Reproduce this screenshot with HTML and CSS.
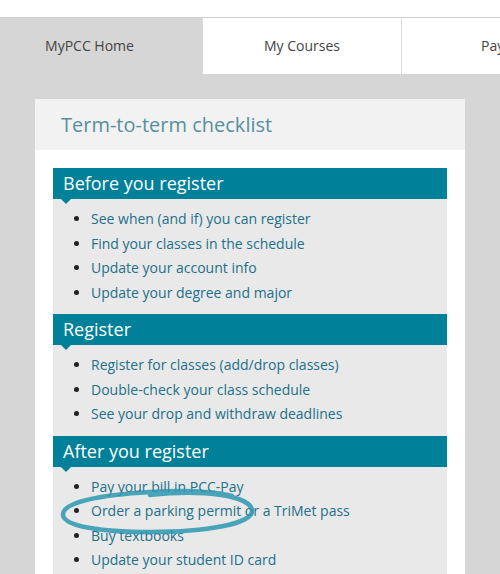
FILE: index.html
```html
<!DOCTYPE html>
<html>
    <head>
        <link rel="stylesheet" href="styles.css">
    </head>
    <body>
        <div class="topbar"></div>
        <div class="tabs">
            <div class="tab active">MyPCC Home</div>
            <div class="tab">My Courses</div>
            <div class="tab last">Pay</div>
        </div>

        <div class="card">
            <div class="card-head">Term-to-term checklist</div>
            <div class="card-body">
                <div class="section">
                    <h2>Before you register</h2>
                    <ul>
                        <li><a href="#">See when (and if) you can register</a></li>
                        <li><a href="#">Find your classes in the schedule</a></li>
                        <li><a href="#">Update your account info</a></li>
                        <li><a href="#">Update your degree and major</a></li>
                    </ul>
                </div>
                <div class="section">
                    <h2>Register</h2>
                    <ul>
                        <li><a href="#">Register for classes (add/drop classes)</a></li>
                        <li><a href="#">Double-check your class schedule</a></li>
                        <li><a href="#">See your drop and withdraw deadlines</a></li>
                    </ul>
                </div>
                <div class="section">
                    <h2>After you register</h2>
                    <ul>
                        <li><a href="#">Pay your bill in PCC-Pay</a></li>
                        <li><a href="#">Order a parking permit or a TriMet pass</a></li>
                        <li><a href="#">Buy textbooks</a></li>
                        <li><a href="#">Update your student ID card</a></li>
                    </ul>
                </div>
            </div>
        </div>

        <!-- hand drawn circle around the parking permit link -->
        <svg class="scribble" width="500" height="574" viewBox="0 0 500 574">
            <path d="M150 495 C205 489 250 496 252 510 C254 524 205 532 150 532 C100 532 62 526 63 514 C64 502 100 495 150 492 C185 490 212 491 232 496"
                  fill="none" stroke="#2d97b0" stroke-opacity="0.85" stroke-width="4.5" stroke-linecap="round"/>
        </svg>
    </body>
</html>
```

FILE: styles.css
```css
body{
    margin:0;
    background-color:#d6d6d6;
    font-family:"Open Sans", "DejaVu Sans", sans-serif;
    position:relative;
    overflow:hidden;
    height:574px;
}

.topbar{
    height:17px;
    background-color:#fff;
    border-bottom:1px solid #d0d0d0;
}

.tabs{
    display:flex;
    height:56px;
    white-space:nowrap;
}
.tab{
    flex:0 0 198px;
    display:flex;
    align-items:center;
    justify-content:center;
    background-color:#fff;
    border-left:1px solid #dcdcdc;
    color:#444;
    font-size:14px;
    padding-bottom:2px;
}
.tab.active{
    flex-basis:179px;
    padding-right:23px;
    background-color:transparent;
    border-left:none;
}
.tab.last{
    flex:1;
    justify-content:flex-start;
    padding-left:79px;
}

.card{
    margin:25px 0 0 35px;
    width:430px;
    background-color:#fff;
}
.card-head{
    height:51px;
    line-height:52px;
    padding-left:26px;
    background-color:#f2f2f2;
    color:#5690a1;
    font-size:20px;
}
.card-body{
    padding:18px 18px 0;
}

.section h2{
    position:relative;
    margin:0;
    height:31px;
    line-height:31px;
    padding-left:10px;
    background-color:#008199;
    color:#fff;
    font-size:18px;
    font-weight:normal;
}
.section h2::after{
    content:"";
    position:absolute;
    left:8px;
    top:31px;
    border-left:5px solid transparent;
    border-right:5px solid transparent;
    border-top:5px solid #008199;
}
.section ul{
    margin:0;
    padding:8px 0 9px 38px;
    background-color:#e9e9e9;
}
.section li{
    line-height:24.5px;
    font-size:14px;
    color:#222;
}
a{
    text-decoration:none;
    color:#22708a;
}

.scribble{
    position:absolute;
    left:0;
    top:0;
    pointer-events:none;
}
```
